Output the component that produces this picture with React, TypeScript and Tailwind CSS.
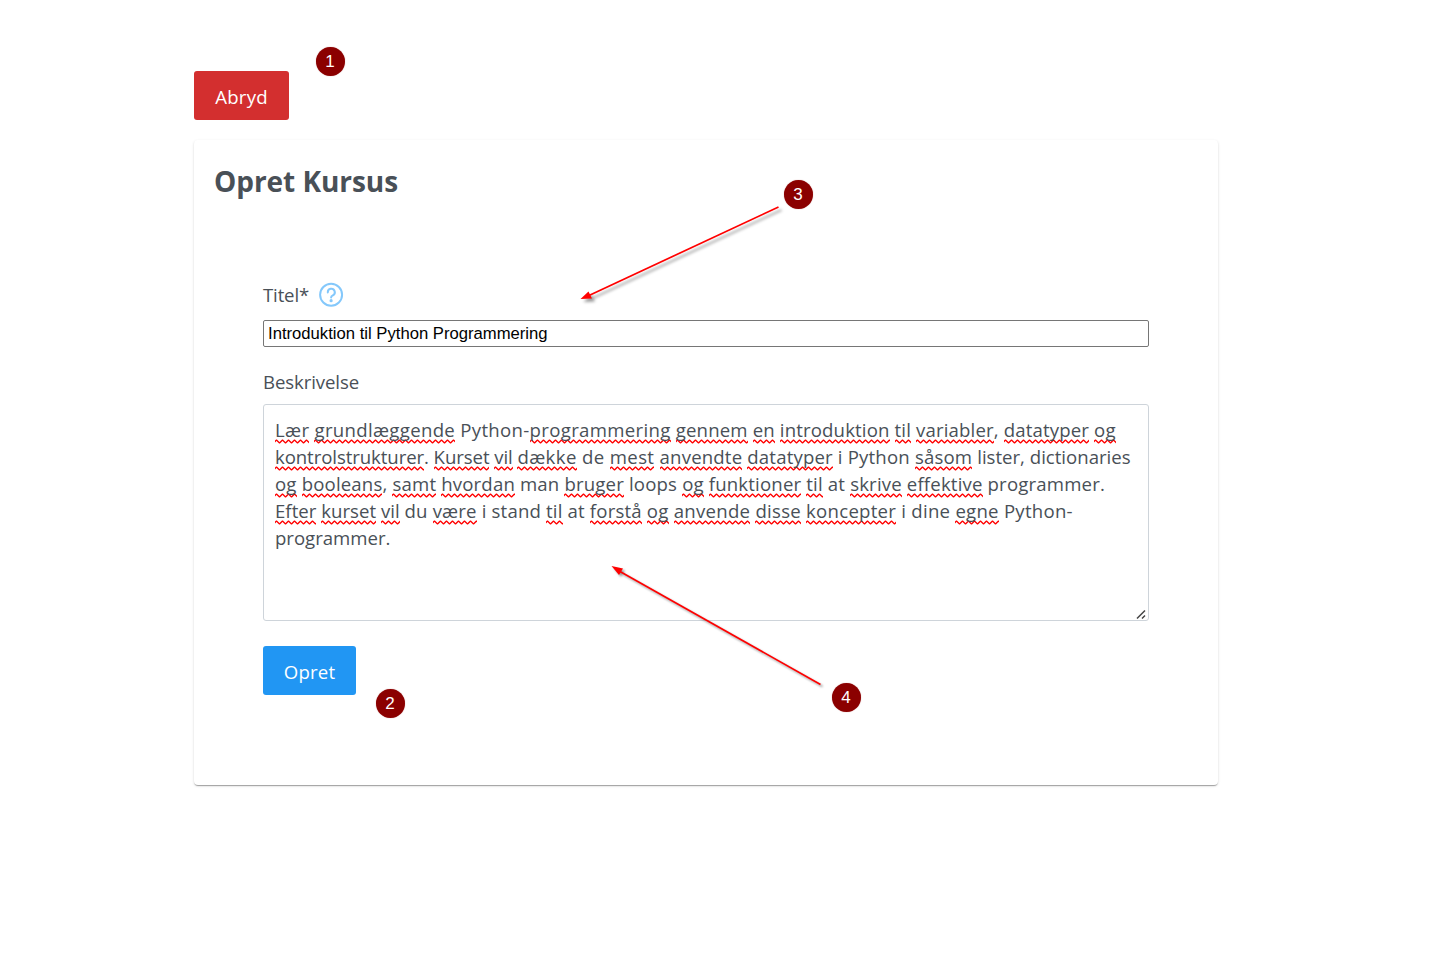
const squiggle =
  "pb-[2px] bg-[url('data:image/svg+xml,%3Csvg%20xmlns=%22http://www.w3.org/2000/svg%22%20width=%226%22%20height=%225%22%3E%3Cpath%20d=%22M-1.5%203.9L1.5%201.1L4.5%203.9L7.5%201.1%22%20fill=%22none%22%20stroke=%22red%22%20stroke-width=%221.3%22%20stroke-linejoin=%22round%22/%3E%3C/svg%3E')] bg-[length:6px_5px] bg-left-bottom bg-repeat-x";

type Chunk = [text: string, tracking: string];

// Words in square brackets are flagged by the spell checker.
const lines: Chunk[][] = [
  [
    ["[Lær] [grundlæggende] Python-[programmering] ", "tracking-[0.32px]"],
    ["[gennem] [en] [introduktion] [til] [variabler], [datatyper] [og]", "tracking-[0.15px]"],
  ],
  [
    ["[kontrolstrukturer]. [Kurset] [vil] ", "tracking-[-0.08px]"],
    ["[dække] de [mest] ", "tracking-[0.38px]"],
    ["[anvendte] [datatyper] i Python [såsom] ", "tracking-[0.17px]"],
    ["lister, dictionaries", "tracking-[0px]"],
  ],
  [["[og] [booleans], [samt] [hvordan] man [bruger] loops [og] [funktioner] [til] at [skrive] [effektive] programmer.", "tracking-[0.17px]"]],
  [
    ["[Efter] [kurset] [vil] ", "tracking-[0.02px]"],
    ["du [være] i stand [til] at [forstå] ", "tracking-[0.17px]"],
    ["[og] [anvende] [disse] ", "tracking-[0.27px]"],
    ["[koncepter] i dine [egne] Python-", "tracking-[0.26px]"],
  ],
  [["programmer.", "tracking-[-0.02px]"]],
];

function Line({ chunks }: { chunks: Chunk[] }) {
  return (
    <div className="h-[27px] whitespace-pre">
      {chunks.map(([text, tracking]) => (
        <span key={text} className={tracking}>
          {text.split(/(\[[^\]]+\])/).map((part, i) =>
            part.startsWith("[") ? (
              <span key={i} className={squiggle}>{part.slice(1, -1)}</span>
            ) : (
              part
            ),
          )}
        </span>
      ))}
    </div>
  );
}

function Badge({ n, pos }: { n: number; pos: string }) {
  return (
    <div className={`absolute flex size-[29px] items-center justify-center rounded-full bg-[#8b0000] pr-px font-['Liberation_Sans',sans-serif] text-[17px] leading-none text-white shadow-[0_0_1px_#8b000080] ${pos}`}>
      {n}
    </div>
  );
}

export default function App() {
  return (
    <div className="relative h-[961px] w-[1452px] overflow-hidden bg-white font-['Open_Sans','Noto_Sans',sans-serif] text-[18.6px] text-[#495057]">
      <main className="ml-[194px] flex w-[1024px] flex-col items-start pt-[71px]">
        <button className="h-[49px] w-[95px] rounded-[3px] bg-[#d32f2f] pt-[2px] tracking-[0.25px] text-white">Abryd</button>
        <section className="mt-[20px] h-[645px] w-full rounded bg-white px-[20px] shadow-[0_2px_1px_-1px_rgba(0,0,0,0.2),0_1px_1px_0_rgba(0,0,0,0.14),0_1px_3px_0_rgba(0,0,0,0.12)]">
          <h1 className="pt-[21px] text-[28px] leading-[40px] font-bold tracking-[-0.05px]">Opret Kursus</h1>
          <form className="mx-[49px] flex flex-col items-start pt-[79px]">
            <label className="flex h-[28px] items-center gap-[10px] pt-px">
              <span className="tracking-[-0.15px]">Titel*</span>
              <svg className="size-[26px]" viewBox="0 0 26 26" fill="none" stroke="#84c8fb" strokeWidth="2">
                <circle cx="12.1" cy="12.7" r="11" />
                <path d="M8.8 10.4a3.5 3.5 0 1 1 5.1 3C12.6 14.1 12.1 14.6 12.1 15.4" strokeLinecap="round" />
                <circle cx="12.1" cy="18.7" r="1.6" fill="#84c8fb" stroke="none" />
              </svg>
            </label>
            <input
              className="mt-[12px] h-[27px] w-[886px] rounded-[2px] border border-[#767676] px-[4px] font-['Liberation_Sans',sans-serif] text-[16.67px] text-black"
              defaultValue="Introduktion til Python Programmering"
              spellCheck={false}
            />
            <label className="mt-[21px] leading-[28px] tracking-[-0.1px]">Beskrivelse</label>
            <div className="relative mt-[8px] h-[217px] w-[886px] rounded-[3px] border border-[#ced4da] px-[11px] pt-[11px] leading-[27px]">
              {lines.map((chunks, i) => (
                <Line key={i} chunks={chunks} />
              ))}
              <svg className="absolute right-[1px] bottom-0 size-[11px]" viewBox="0 0 11 11" stroke="#444" strokeWidth="1.5">
                <path d="M1 9.5 9 1.5M6 9.5 9 6.5" />
              </svg>
            </div>
            <button type="button" className="mt-[25px] h-[49px] w-[93px] rounded-[3px] bg-[#2196f3] pt-[2px] tracking-[0.2px] text-white">Opret</button>
          </form>
        </section>
      </main>

      <svg className="pointer-events-none absolute inset-0 h-[961px] w-[1452px]" fill="red" stroke="red">
        <g className="drop-shadow-[3px_3px_1.5px_rgba(0,0,0,0.4)]">
          <path d="M778.5 207 589 295.5" strokeWidth="1.7" />
          <path d="M580.5 299 588.5 291.5 592 298.5Z" stroke="none" />
        </g>
        <g className="drop-shadow-[2px_2px_1px_rgba(0,0,0,0.4)]">
          <path d="M820.5 684.5 620 571.5" strokeWidth="1.7" />
          <path d="M611.5 566 623 568.5 619 575Z" stroke="none" />
        </g>
      </svg>

      <Badge n={1} pos="left-[316px] top-[47px]" />
      <Badge n={2} pos="left-[376px] top-[689px]" />
      <Badge n={3} pos="left-[784px] top-[180px]" />
      <Badge n={4} pos="left-[832px] top-[683px]" />
    </div>
  );
}
